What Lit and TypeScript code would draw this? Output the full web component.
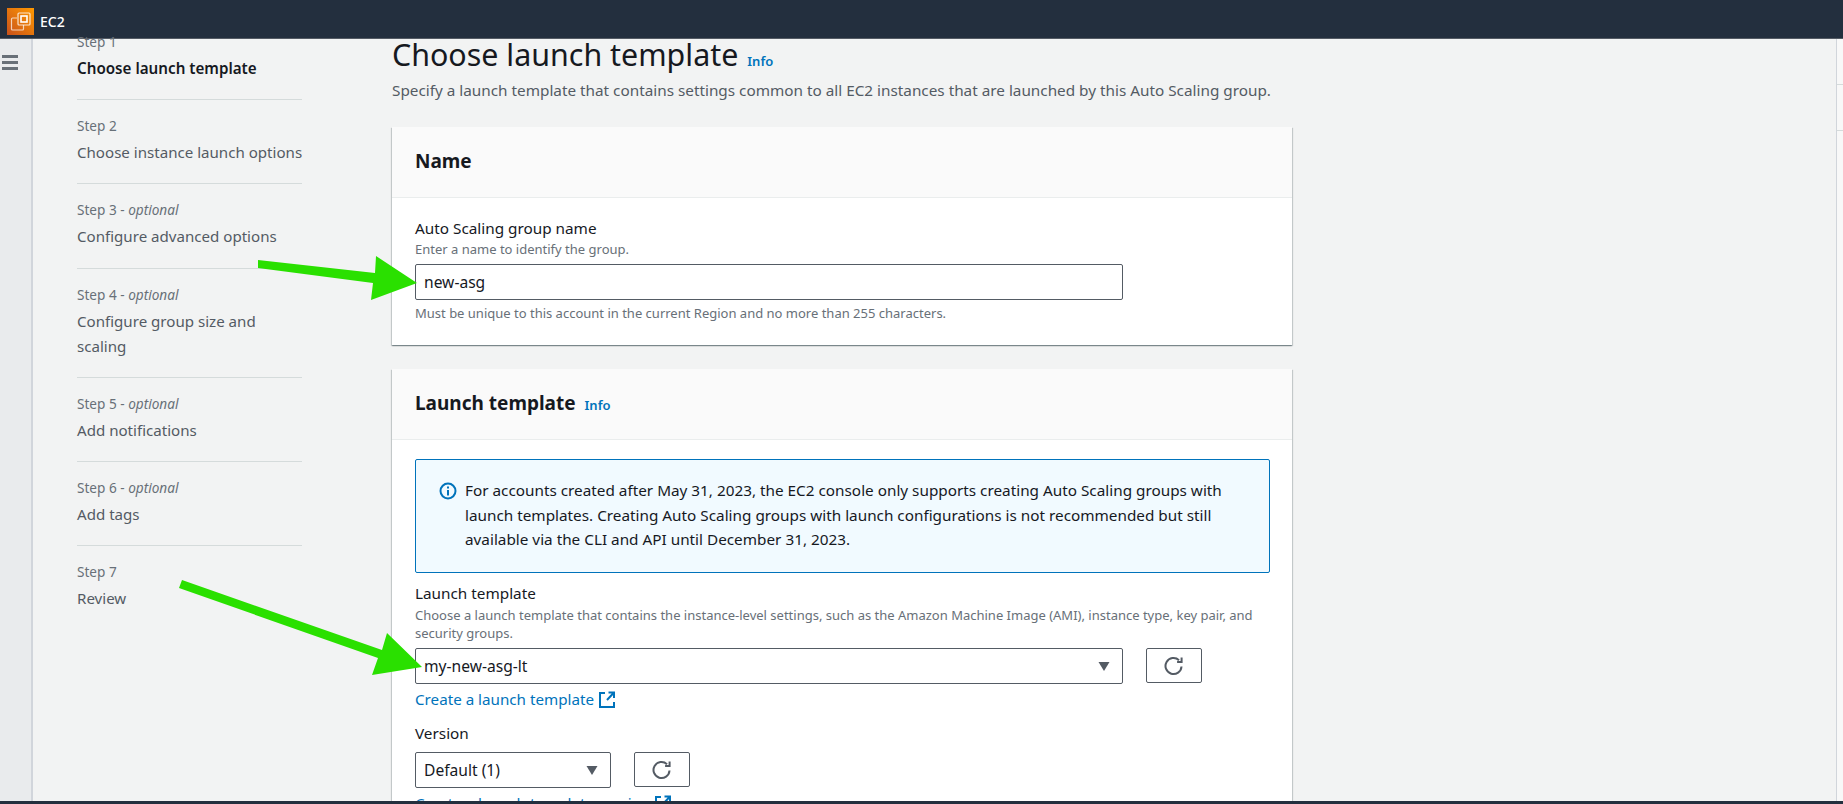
import { LitElement, html, css, svg } from 'lit';
import { customElement } from 'lit/decorators.js';

const steps = [
  { label: 'Step 1', title: ['Choose launch template'], active: true },
  { label: 'Step 2', title: ['Choose instance launch options'] },
  { label: 'Step 3', optional: true, title: ['Configure advanced options'] },
  { label: 'Step 4', optional: true, title: ['Configure group size and', 'scaling'] },
  { label: 'Step 5', optional: true, title: ['Add notifications'] },
  { label: 'Step 6', optional: true, title: ['Add tags'] },
  { label: 'Step 7', title: ['Review'] },
];

const refreshIcon = html`<svg width="20" height="20" viewBox="0 0 20 20" fill="none" stroke="#545b64" stroke-width="2">
  <path d="M17.500 10.500a8 8 0 1 1-2.500-6.300" />
  <path d="M17.600 1.500v4.500h-4.500" stroke-width="2" />
</svg>`;

const caret = html`<svg class="caret" width="12" height="9" viewBox="0 0 12 9"><path d="M0.500 0h11L6 9z" fill="#545b64" /></svg>`;

const externalIcon = html`<svg class="ext" width="16" height="17" viewBox="0 0 16 17" fill="none" stroke="#0073bb" stroke-width="2">
  <path d="M6 2H1v14h14V11" />
  <path d="M9.500 1.500h5.500V7M15 1.500L8 9" />
</svg>`;

@customElement('app-root')
export class AppRoot extends LitElement {
  static override styles = css`
    :host {
      display: block;
      position: relative;
      width: 1843px;
      height: 804px;
      overflow: hidden;
      background: #f2f3f3;
      color: #16191f;
      font-family: 'Noto Sans', sans-serif;
      font-size: 15.3px;
    }
    .page {
      display: flex;
      flex-direction: column;
      height: 100%;
    }
    .topbar {
      flex: none;
      display: flex;
      align-items: center;
      gap: 6px;
      height: 39px;
      box-sizing: border-box;
      padding: 4px 0 0 7px;
      background: #232f3e;
      border-bottom: 1px solid #545b64;
      color: #fff;
      font-size: 14px;
      font-weight: 500;
    }
    .body {
      flex: 1;
      display: flex;
      min-height: 0;
    }
    .rail {
      flex: none;
      width: 33px;
      padding: 16px 0 0 2px;
      box-sizing: border-box;
      background: #e9ebed;
      border-right: 2px solid #d1d5db;
    }
    .burger {
      display: flex;
      flex-direction: column;
      gap: 3.500px;
      width: 16px;
    }
    .burger span {
      height: 2.500px;
      background: #687078;
    }
    .nav {
      flex: none;
      width: 225px;
      margin: -7px 0 0 44px;
    }
    .step {
      padding-bottom: 18.200px;
      margin-bottom: 16px;
      border-bottom: 1px solid #d5dbdb;
    }
    .step:last-child {
      border-bottom: none;
    }
    .step-label {
      font-size: 13.600px;
      line-height: 20px;
      color: #687078;
      margin-bottom: 4px;
    }
    .step-label i {
      font-style: italic;
    }
    .step-title {
      font-size: 15.100px;
      line-height: 25px;
      color: #545b64;
      white-space: nowrap;
    }
    .step.active .step-title {
      color: #16191f;
      font-size: 15.200px;
      font-weight: 600;
    }
    .main {
      flex: none;
      width: 900px;
      margin-left: 90px;
    }
    h1 {
      margin: -4px 0 0;
      font-size: 30.400px;
      font-weight: 400;
      line-height: 40px;
      display: flex;
      align-items: baseline;
      gap: 9px;
    }
    .info {
      color: #0073bb;
      font-size: 13px;
      font-weight: 600;
      line-height: 1;
    }
    .lede {
      margin: 4px 0 0;
      line-height: 22px;
      color: #545b64;
      white-space: nowrap;
    }
    .card {
      background: #fff;
      margin-top: 24px;
      box-shadow: 0 1px 1px 0 rgba(0, 28, 36, 0.3), 1px 1px 1px 0 rgba(0, 28, 36, 0.15), -1px 1px 1px 0 rgba(0, 28, 36, 0.15);
    }
    .card.first {
      margin-top: 26px;
    }
    .card-head {
      display: flex;
      align-items: baseline;
      gap: 9px;
      height: 71px;
      box-sizing: border-box;
      padding: 21px 23px 0;
      background: #fafafa;
      border-bottom: 1px solid #eaeded;
    }
    h2 {
      margin: 0;
      font-size: 19px;
      line-height: 26px;
      font-weight: 700;
    }
    .card-body {
      padding: 19px 23px 23px;
    }
    .first .card-body {
      padding-top: 20px;
    }
    .label {
      line-height: 21px;
      margin-bottom: 2px;
    }
    .first .label {
      margin-bottom: 1px;
    }
    .desc {
      font-size: 13px;
      line-height: 18px;
      color: #687078;
    }
    .control-row {
      display: flex;
      gap: 23px;
      margin-top: 6px;
    }
    .control {
      display: flex;
      align-items: center;
      justify-content: space-between;
      box-sizing: border-box;
      width: 708px;
      height: 36px;
      padding: 0 12px 0 8px;
      background: #fff;
      border: 1px solid #545b64;
      border-radius: 2px;
      font-size: 15.600px;
    }
    .control.small {
      width: 196px;
    }
    .refresh {
      display: flex;
      align-items: center;
      justify-content: center;
      box-sizing: border-box;
      width: 56px;
      height: 35px;
      background: #fff;
      border: 1px solid #545b64;
      border-radius: 2px;
    }
    .hint {
      margin-top: 4px;
    }
    .alert {
      display: flex;
      gap: 8px;
      box-sizing: border-box;
      width: 855px;
      height: 114px;
      padding: 18px 20px 0 23px;
      margin-bottom: 10px;
      background: #f1faff;
      border: 1px solid #0073bb;
      border-radius: 2px;
      line-height: 24.500px;
    }
    .alert svg {
      flex: none;
      margin-top: 4px;
    }
    .link {
      display: flex;
      align-items: center;
      gap: 5px;
      margin-top: 4px;
      color: #0073bb;
      font-size: 15.200px;
      line-height: 22px;
    }
    .version {
      margin: 13px 0 8px;
    }
    .side {
      flex: 1;
      display: flex;
      justify-content: flex-end;
    }
    .panel {
      width: 6px;
      border-left: 1px solid #d1d5db;
      background: #f8f8f8;
    }
    .panel span {
      display: block;
      height: 45px;
      border-bottom: 1px solid #d5dbdb;
    }
    .footer {
      flex: none;
      height: 3px;
      background: #232f3e;
    }
    .arrows {
      position: absolute;
      inset: 0;
      pointer-events: none;
    }
  `;

  private _renderStep(s: (typeof steps)[number]) {
    return html`
      <div class="step ${s.active ? 'active' : ''}">
        <div class="step-label">${s.label}${s.optional ? html` - <i>optional</i>` : ''}</div>
        ${s.title.map((t) => html`<div class="step-title">${t}</div>`)}
      </div>
    `;
  }

  override render() {
    return html`
      <div class="page">
        <div class="topbar">
          <svg width="27" height="27" viewBox="0 0 27 27">
            <defs>
              <linearGradient id="ec2" x1="0" y1="1" x2="1" y2="0">
                <stop offset="0" stop-color="#c8511b" />
                <stop offset="1" stop-color="#f90" />
              </linearGradient>
            </defs>
            <rect width="27" height="27" fill="url(#ec2)" />
            <g fill="none" stroke="#fff" stroke-width="1.200">
              <path d="M10 10H5.500a1 1 0 0 0-1 1v10a1 1 0 0 0 1 1h10a1 1 0 0 0 1-1v-4" opacity=".7" />
              <rect x="11" y="5" width="12" height="12" rx="1" opacity=".8" />
              <rect x="14" y="8" width="6" height="6" stroke-width="1.600" />
            </g>
          </svg>
          <span>EC2</span>
        </div>
        <div class="body">
          <div class="rail">
            <div class="burger"><span></span><span></span><span></span></div>
          </div>
          <nav class="nav">${steps.map((s) => this._renderStep(s))}</nav>
          <div class="main">
            <h1>Choose launch template <span class="info">Info</span></h1>
            <p class="lede">Specify a launch template that contains settings common to all EC2 instances that are launched by this Auto Scaling group.</p>
            <section class="card first">
              <div class="card-head"><h2>Name</h2></div>
              <div class="card-body">
                <div class="label">Auto Scaling group name</div>
                <div class="desc">Enter a name to identify the group.</div>
                <div class="control-row"><div class="control">new-asg</div></div>
                <div class="desc hint">Must be unique to this account in the current Region and no more than 255 characters.</div>
              </div>
            </section>
            <section class="card">
              <div class="card-head"><h2>Launch template</h2><span class="info">Info</span></div>
              <div class="card-body">
                <div class="alert">
                  <svg width="18" height="18" viewBox="0 0 18 18" fill="none" stroke="#0073bb" stroke-width="2">
                    <circle cx="9" cy="9" r="7.500" />
                    <path d="M9 8v5.500M9 4.500v2" />
                  </svg>
                  <div>
                    For accounts created after May 31, 2023, the EC2 console only supports creating Auto Scaling groups with<br />
                    launch templates. Creating Auto Scaling groups with launch configurations is not recommended but still<br />
                    available via the CLI and API until December 31, 2023.
                  </div>
                </div>
                <div class="label">Launch template</div>
                <div class="desc">
                  Choose a launch template that contains the instance-level settings, such as the Amazon Machine Image (AMI), instance type, key pair, and<br />
                  security groups.
                </div>
                <div class="control-row">
                  <div class="control">my-new-asg-lt ${caret}</div>
                  <div class="refresh">${refreshIcon}</div>
                </div>
                <div class="link">Create a launch template ${externalIcon}</div>
                <div class="label version">Version</div>
                <div class="control-row">
                  <div class="control small">Default (1) ${caret}</div>
                  <div class="refresh">${refreshIcon}</div>
                </div>
                <div class="link">Create a launch template version ${externalIcon}</div>
              </div>
            </section>
          </div>
          <div class="side">
            <div class="panel"><span></span><span></span></div>
          </div>
        </div>
        <div class="footer"></div>
      </div>
      <svg class="arrows" width="1843" height="804" viewBox="0 0 1843 804">
        ${svg`<polygon fill="#2ae000" points="258,260 375,273 376,256 417,283 371,300 373,283 258,268" />`}
        ${svg`<polygon fill="#2ae000" points="182,580 382,650 387,633 422,667 372,675 378,658 179,588" />`}
      </svg>
    `;
  }
}

declare global {
  interface HTMLElementTagNameMap {
    'app-root': AppRoot;
  }
}
